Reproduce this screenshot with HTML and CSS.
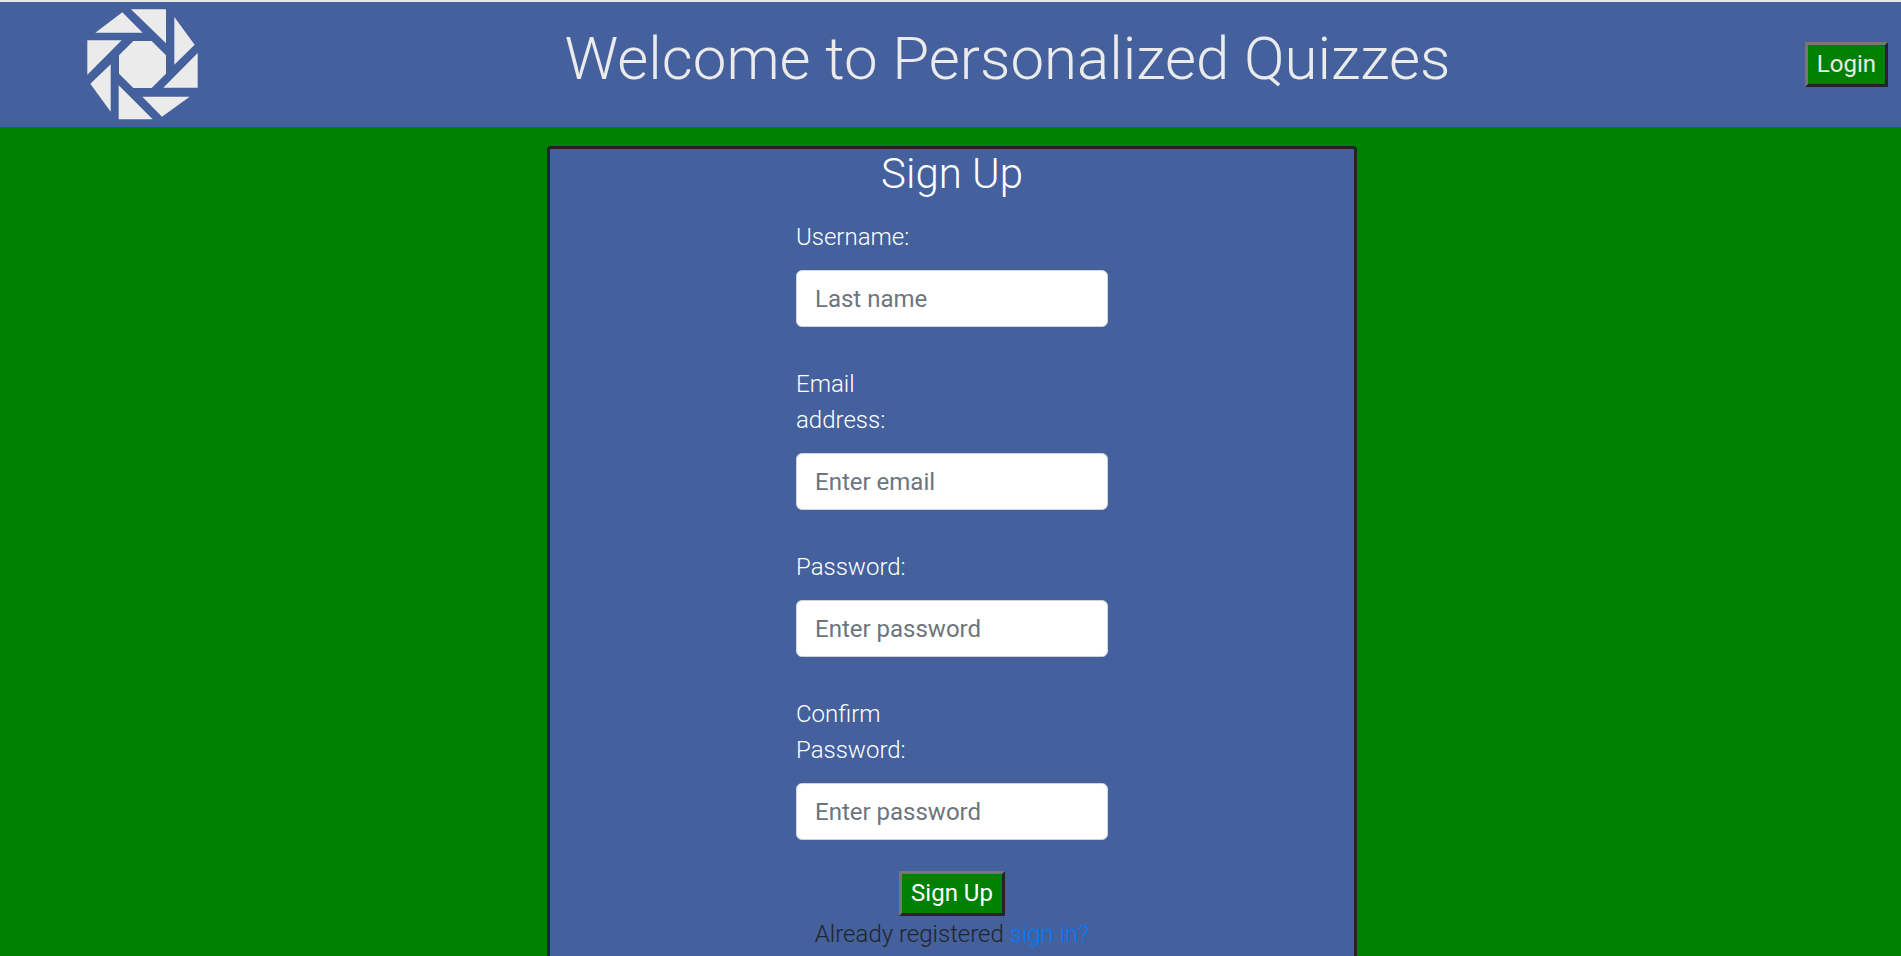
FILE: index.html
```html
<!DOCTYPE html>
<html lang="en">
<head>
<meta charset="utf-8">
<meta name="viewport" content="width=device-width, initial-scale=1">
<title>Personalized Quizzes</title>
<link rel="stylesheet" href="styles.css">
</head>
<body>
<header class="site-header">
  <a class="brand" href="#" aria-label="Home">
    <svg class="brand-logo" viewBox="51 27 333 333" aria-hidden="true">
      <path d="M190 123H245L288 166V221L245 264H190L147 221V166Z"/>
      <path d="M183 28H288V130Z"/>
      <path d="M313 51L374 134L313 194Z"/>
      <path d="M383 159V263H280Z"/>
      <path d="M217 290H359L276 350Z"/>
      <path d="M146 256L248 358H146Z"/>
      <path d="M122 193V335L61 251Z"/>
      <path d="M52 121H155L52 224Z"/>
      <path d="M157 37L218 98H76Z"/>
    </svg>
  </a>
  <h1 class="site-title">Welcome to Personalized Quizzes</h1>
  <button class="btn btn-login" type="button">Login</button>
</header>
<main class="content">
  <section class="card">
    <h2 class="card-title">Sign Up</h2>
    <form class="form">
      <div class="field">
        <label class="label" for="username">Username:</label>
        <input class="input" id="username" type="text" placeholder="Last name">
      </div>
      <div class="field">
        <label class="label" for="email">Email address:</label>
        <input class="input" id="email" type="email" placeholder="Enter email">
      </div>
      <div class="field">
        <label class="label" for="password">Password:</label>
        <input class="input" id="password" type="password" placeholder="Enter password">
      </div>
      <div class="field">
        <label class="label" for="confirm">Confirm Password:</label>
        <input class="input" id="confirm" type="password" placeholder="Enter password">
      </div>
      <button class="btn btn-submit" type="submit">Sign Up</button>
      <p class="note">Already registered <a class="link" href="#">sign in?</a></p>
    </form>
  </section>
</main>
</body>
</html>
```
FILE: styles.css
```css
* {
  box-sizing: border-box;
}

body {
  display: flex;
  flex-direction: column;
  min-height: 100vh;
  margin: 0;
  border-top: 2px solid #e6eaea;
  background: #008000;
  color: #212529;
  font: 300 24px/36px Roboto, sans-serif;
}

.site-header {
  display: flex;
  align-items: center;
  justify-content: space-between;
  padding: 7px 13px 7px 75px;
  background: #44609d;
}

.brand {
  display: block;
  padding: 0 12px;
}

.brand-logo {
  display: block;
  width: 111px;
  height: 111px;
  fill: #ebebeb;
}

.site-title {
  margin: 0 0 12px;
  color: #ebebeb;
  font-size: 60px;
  font-weight: 300;
  line-height: 72px;
}

.btn {
  padding: 2px 9px;
  border: 3px solid;
  border-color: #767676 #212529 #212529 #767676;
  background: #008000;
  color: #fff;
  font: 400 24px/35px Roboto, sans-serif;
}

.btn-login {
  color: #ebebeb;
}

.content {
  display: flex;
  flex: 1;
  justify-content: center;
  padding: 19px 0 0 3px;
}

.card {
  width: 810px;
  max-width: 100%;
  border: 3px solid #212529;
  border-bottom: 0;
  border-radius: 4px 4px 0 0;
  background: #44609d;
}

.card-title {
  margin: 0 0 20px;
  color: #fff;
  font-size: 42px;
  font-weight: 300;
  line-height: 50px;
  text-align: center;
}

.form {
  display: flex;
  flex-direction: column;
  align-items: center;
}

.field {
  width: 312px;
  max-width: 100%;
  margin-bottom: 39px;
}

.field:last-of-type {
  margin-bottom: 31px;
}

.label {
  display: block;
  width: 128px;
  margin-bottom: 15px;
  color: #fff;
}

.input {
  display: block;
  width: 100%;
  height: 57px;
  padding: 9px 18px;
  border: 1px solid #ced4da;
  border-radius: 6px;
  background: #fff;
  color: #495057;
  font: 400 24px/36px Roboto, sans-serif;
}

.input::placeholder {
  color: #6c757d;
}

.note {
  margin: 0;
}

.link {
  color: #007bff;
  text-decoration: none;
}
```
